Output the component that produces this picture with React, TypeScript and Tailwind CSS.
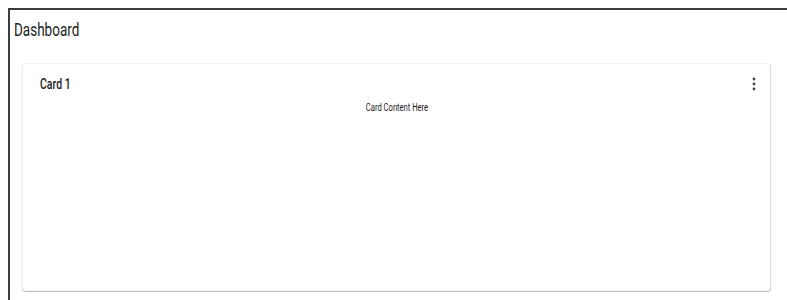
import React from 'react';

function KebabIcon() {
  return (
    <svg width="4" height="14" viewBox="0 0 4 14" className="fill-[#444]">
      <circle cx="2" cy="2" r="1.4" />
      <circle cx="2" cy="7" r="1.4" />
      <circle cx="2" cy="12" r="1.4" />
    </svg>
  );
}

export default function App() {
  return (
    <div className="h-[300px] overflow-hidden bg-white pl-2 pt-2 font-['Roboto',sans-serif] text-[#212121]">
      <div className="h-full border-l-2 border-t-2 border-[#3c3c3c] pl-1 pr-4">
        <h1 className="flex h-[38px] items-center text-[18px] font-normal">
          <span className="inline-block origin-left scale-x-[0.75]">Dashboard</span>
        </h1>
        <div className="ml-2 mt-[15px] h-[228px] rounded-sm border border-[#f2f2f2] border-r-[#dcdcdc] bg-white shadow-[0_1px_1px_rgba(0,0,0,0.28)]">
          <div className="flex items-center justify-between pl-[17px] pr-[14px] pt-[10px]">
            <span className="inline-block origin-left scale-x-[0.75] text-[14px] leading-5 font-medium">Card 1</span>
            <KebabIcon />
          </div>
          <div className="mt-[7px] text-center text-[10px] leading-[14px]">
            <span className="inline-block scale-x-[0.76]">Card Content Here</span>
          </div>
        </div>
      </div>
    </div>
  );
}
